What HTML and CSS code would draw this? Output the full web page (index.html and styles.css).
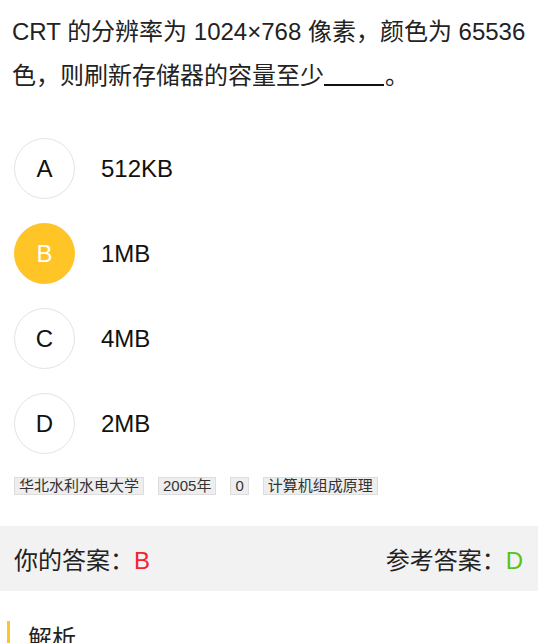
FILE: index.html
```html
<!DOCTYPE html>
<html lang="zh-CN">
<head>
    <meta charset="UTF-8">
    <meta name="viewport" content="width=device-width, initial-scale=1.0">
    <title>题目详情</title>
    <link rel="stylesheet" href="styles.css">
</head>
<body>
    <div class="question">
        CRT 的分辨率为 1024×768 像素，颜色为 65536 色，则刷新存储器的容量至少<span class="blank"></span>。
    </div>

    <ul class="options">
        <li class="option">
            <span class="letter">A</span>
            <span class="option-text">512KB</span>
        </li>
        <li class="option selected">
            <span class="letter">B</span>
            <span class="option-text">1MB</span>
        </li>
        <li class="option">
            <span class="letter">C</span>
            <span class="option-text">4MB</span>
        </li>
        <li class="option">
            <span class="letter">D</span>
            <span class="option-text">2MB</span>
        </li>
    </ul>

    <div class="tags">
        <span class="tag">华北水利水电大学</span>
        <span class="tag">2005年</span>
        <span class="tag">0</span>
        <span class="tag">计算机组成原理</span>
    </div>

    <div class="answer-bar">
        <div>你的答案：<span class="wrong">B</span></div>
        <div>参考答案：<span class="right">D</span></div>
    </div>

    <div class="analysis">
        <h3 class="analysis-title">解析</h3>
    </div>
</body>
</html>
```

FILE: styles.css
```css
body {
    margin: 0;
    font-family: "Liberation Sans", "Noto Sans CJK SC", sans-serif;
    color: #222;
    background: #fff;
}
.question {
    padding: 10px 6px 0 12px;
    font-size: 24px;
    line-height: 44px;
}
.blank {
    display: inline-block;
    width: 60px;
    height: 2px;
    margin-right: 1px;
    background: #111;
    vertical-align: -2px;
}
.options {
    list-style: none;
    margin: 28px 0 0;
    padding: 0 14px;
}
.option {
    display: flex;
    align-items: center;
    padding: 12px 0;
    font-size: 24px;
}
.letter {
    width: 59px;
    height: 59px;
    border: 1px solid #e3e3e3;
    border-radius: 50%;
    display: flex;
    align-items: center;
    justify-content: center;
    color: #111;
}
.selected .letter {
    background: #ffc426;
    border-color: #ffc426;
    color: #fff;
}
.option-text {
    margin-left: 26px;
    color: #111;
}
.tags {
    display: flex;
    gap: 14px;
    margin-top: 11px;
    padding: 0 14px;
}
.tag {
    font-size: 15px;
    line-height: 16px;
    padding: 0 4px;
    background: #eee;
    border: 1px solid #ddd;
    color: #333;
}
.answer-bar {
    display: flex;
    justify-content: space-between;
    align-items: center;
    height: 65px;
    margin-top: 31px;
    padding: 0 15px 0 14px;
    background: #f2f2f2;
    font-size: 24px;
    color: #222;
}
.wrong {
    color: #f5222d;
}
.right {
    color: #52c41a;
}
.analysis {
    margin: 30px 0 0 7px;
    padding-left: 18px;
    border-left: 3px solid #ffc426;
}
.analysis-title {
    margin: 0;
    font-size: 24px;
    font-weight: normal;
    line-height: 36px;
}
```
